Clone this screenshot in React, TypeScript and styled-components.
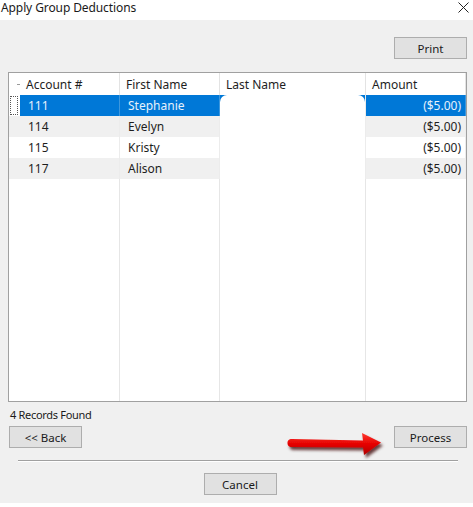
import React from "react";
import styled, { createGlobalStyle, css } from "styled-components";

const Global = createGlobalStyle`
  html, body { margin: 0; padding: 0; background: #ffffff; }
  body { font-family: "Segoe UI", "Noto Sans", "Liberation Sans", sans-serif; color: #000; }
  * { box-sizing: border-box; }
`;

const Window = styled.div`
  width: 473px;
  height: 507px;
  display: flex;
  flex-direction: column;
  background: #ffffff;
  overflow: hidden;
`;

const TitleBar = styled.div`
  height: 20px;
  display: flex;
  align-items: center;
  justify-content: space-between;
  padding: 0 4px 5px 1px;
  font-size: 12px;
  color: #1a1a1a;
`;

const Title = styled.span`
  letter-spacing: -0.1px;
`;

const Close = styled.svg`
  width: 11px;
  height: 11px;
`;

const Body = styled.div`
  height: 483px;
  background: #f0f0f0;
  display: flex;
  flex-direction: column;
  padding: 17px 6px 0 8px;
`;

const TopRow = styled.div`
  display: flex;
  justify-content: flex-end;
`;

const Button = styled.button<{ $w?: number }>`
  width: ${(p) => p.$w ?? 73}px;
  height: 22px;
  background: #e1e1e1;
  border: 1px solid #adadad;
  font-family: "Segoe UI", "Noto Sans", "Liberation Sans", sans-serif;
  font-size: 11.5px;
  color: #1a1a1a;
  padding: 0;
  margin: 0;
  flex-shrink: 0;
`;

const Table = styled.div`
  margin-top: 13px;
  width: 459px;
  height: 330px;
  border: 1px solid #a0a0a0;
  background: #ffffff;
  display: grid;
  grid-template-columns: 11px 100px 100px 146px 1fr;
  grid-template-rows: 22px repeat(4, 21px) 1fr;
  font-size: 12px;
`;

const HeadCell = styled.div<{ $first?: boolean }>`
  display: flex;
  align-items: center;
  padding-left: 6px;
  border-right: 1px solid #e3e3e3;
  color: #1e1e1e;
  position: relative;
  ${(p) =>
    p.$first &&
    css`
      padding-left: 0;
      border-right: none;
    `}
`;

const SortMark = styled.span`
  position: absolute;
  right: 0;
  top: 11px;
  width: 3px;
  height: 1px;
  background: #9a9a9a;
`;

type Tone = "sel" | "odd" | "even";

const toneBg = (t: Tone) => (t === "sel" ? "#0078d7" : t === "even" ? "#f0f0f0" : "#ffffff");

const Cell = styled.div<{ $tone: Tone; $right?: boolean }>`
  display: flex;
  align-items: center;
  justify-content: ${(p) => (p.$right ? "flex-end" : "flex-start")};
  padding: ${(p) => (p.$right ? "0 4px 0 0" : "0 0 0 8px")};
  background: ${(p) => toneBg(p.$tone)};
  color: ${(p) => (p.$tone === "sel" ? "#e6f1fb" : "#1e1e1e")};
  border-right: 1px solid ${(p) => (p.$tone === "sel" ? "#3d97dd" : "#ececec")};
`;

const RowHead = styled.div<{ $tone: Tone }>`
  background: ${(p) => (p.$tone === "even" ? "#f0f0f0" : "#ffffff")};
  padding: 1px;
  display: flex;
`;

const FocusRect = styled.div`
  width: 8px;
  height: 19px;
  border: 1px dotted #555;
`;

const HiddenCell = styled.div<{ $tone: Tone }>`
  background: ${(p) => (p.$tone === "sel" ? "#0078d7" : "#ffffff")};
  border-right: 1px solid #ececec;
  display: flex;
`;

const Redaction = styled.div<{ $top?: boolean; $bottom?: boolean }>`
  flex: 1;
  background: #ffffff;
  border-radius: ${(p) => (p.$top ? "7px 7px 0 0" : p.$bottom ? "0 0 7px 7px" : "0")};
`;

const Filler = styled.div<{ $line?: boolean }>`
  border-right: ${(p) => (p.$line ? "1px solid #e6e6e6" : "none")};
`;

const Status = styled.div`
  margin-top: 5px;
  padding-left: 2px;
  font-size: 11px;
  letter-spacing: -0.3px;
  color: #1a1a1a;
  height: 15px;
  line-height: 15px;
`;

const ButtonRow = styled.div`
  margin-top: 4px;
  height: 22px;
  display: flex;
  justify-content: space-between;
  align-items: flex-start;
  padding-left: 1px;
`;

const RightGroup = styled.div`
  display: flex;
  align-items: flex-start;
  gap: 11px;
  height: 22px;
`;

const ArrowSvg = styled.svg`
  width: 96px;
  height: 32px;
  margin-top: 6px;
  overflow: visible;
  flex-shrink: 0;
`;

const Separator = styled.div`
  margin: 12px 9px 0 10px;
  height: 2px;
  border-top: 1px solid #a0a0a0;
  border-bottom: 1px solid #ffffff;
`;

const BottomRow = styled.div`
  margin-top: 11px;
  display: flex;
  justify-content: center;
  padding-left: 5px;
`;

const rows = [
  { acc: "111", first: "Stephanie", amt: "($5.00)" },
  { acc: "114", first: "Evelyn", amt: "($5.00)" },
  { acc: "115", first: "Kristy", amt: "($5.00)" },
  { acc: "117", first: "Alison", amt: "($5.00)" },
];

export default function App() {
  return (
    <>
      <Global />
      <Window>
        <TitleBar>
          <Title>Apply Group Deductions</Title>
          <Close viewBox="0 0 11 11">
            <path d="M0.5 0.5 L10.5 10.5 M10.5 0.5 L0.5 10.5" stroke="#222" strokeWidth="1" />
          </Close>
        </TitleBar>
        <Body>
          <TopRow>
            <Button>Print</Button>
          </TopRow>
          <Table>
            <HeadCell $first>
              <SortMark />
            </HeadCell>
            <HeadCell>Account #</HeadCell>
            <HeadCell>First Name</HeadCell>
            <HeadCell>Last Name</HeadCell>
            <HeadCell>Amount</HeadCell>
            {rows.map((r, i) => {
              const tone: Tone = i === 0 ? "sel" : i % 2 === 1 ? "even" : "odd";
              return (
                <React.Fragment key={r.acc}>
                  <RowHead $tone={tone}>{i === 0 && <FocusRect />}</RowHead>
                  <Cell $tone={tone}>{r.acc}</Cell>
                  <Cell $tone={tone}>{r.first}</Cell>
                  <HiddenCell $tone={tone}>
                    <Redaction $top={i === 0} $bottom={i === rows.length - 1} />
                  </HiddenCell>
                  <Cell $tone={tone} $right>
                    {r.amt}
                  </Cell>
                </React.Fragment>
              );
            })}
            <Filler />
            <Filler $line />
            <Filler $line />
            <Filler $line />
            <Filler />
          </Table>
          <Status>4 Records Found</Status>
          <ButtonRow>
            <Button>&lt;&lt; Back</Button>
            <RightGroup>
              <ArrowSvg viewBox="0 0 96 32">
                <defs>
                  <linearGradient id="ar" x1="0" y1="0" x2="0" y2="1">
                    <stop offset="0" stopColor="#ff3b30" />
                    <stop offset="0.5" stopColor="#e60000" />
                    <stop offset="1" stopColor="#b00000" />
                  </linearGradient>
                  <filter id="sh" x="-20%" y="-40%" width="140%" height="180%">
                    <feDropShadow dx="2" dy="3" stdDeviation="1.6" floodColor="#3a0000" floodOpacity="0.75" />
                  </filter>
                </defs>
                <path
                  d="M5 7 L76 8.5 L75 1 L94 10.5 L77 23 L76 15.5 L5 15 C1.5 15 0.5 13 0.5 11 C0.5 9 1.5 7 5 7 Z"
                  fill="url(#ar)"
                  filter="url(#sh)"
                />
              </ArrowSvg>
              <Button>Process</Button>
            </RightGroup>
          </ButtonRow>
          <Separator />
          <BottomRow>
            <Button>Cancel</Button>
          </BottomRow>
        </Body>
      </Window>
    </>
  );
}
